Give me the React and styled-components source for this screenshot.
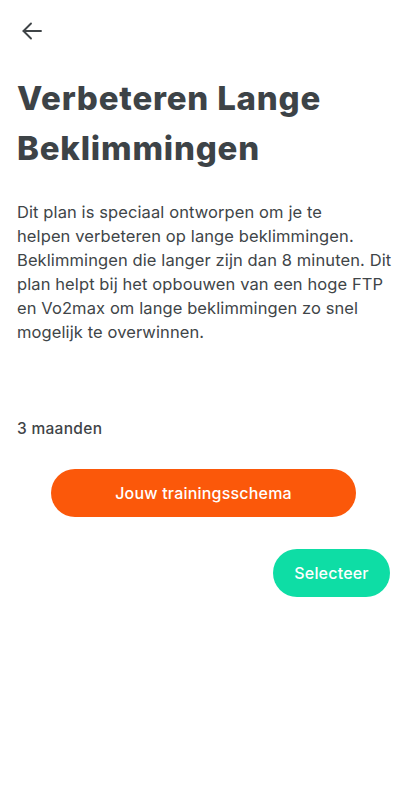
import React from "react";
import styled, { createGlobalStyle } from "styled-components";

const Global = createGlobalStyle`
  html, body { margin: 0; padding: 0; background: #fff; }
  body { font-family: "Inter", "Open Sans", sans-serif; }
  * { box-sizing: border-box; }
`;

const Page = styled.div`
  width: 407px;
  min-height: 800px;
  background: #fff;
  display: flex;
  flex-direction: column;
  padding: 0 17px;
  color: #3f4447;
`;

const TopBar = styled.div`
  height: 62px;
  display: flex;
  align-items: center;
`;

const BackButton = styled.button`
  width: 30px;
  height: 30px;
  border: 0;
  background: transparent;
  padding: 0;
  display: flex;
  align-items: center;
  justify-content: center;
  color: #3f4447;
  cursor: pointer;
`;

const Title = styled.h1`
  margin: 11px 0 0;
  font-family: "Inter", sans-serif;
  font-weight: 800;
  font-size: 33px;
  line-height: 50px;
  letter-spacing: 0.8px;
  color: #3d4347;
`;

const Description = styled.p`
  margin: 27px 0 0;
  font-family: "Inter", sans-serif;
  font-weight: 400;
  font-size: 16.5px;
  line-height: 24px;
  letter-spacing: 0.1px;
  color: #404548;
  white-space: nowrap;
`;

const Duration = styled.div`
  margin-top: 75px;
  font-family: "Inter", sans-serif;
  font-weight: 550;
  font-size: 15.5px;
  line-height: 20px;
  letter-spacing: 0.3px;
  color: #3f4447;
`;

const ButtonRow = styled.div`
  display: flex;
  justify-content: ${(p) => p.$justify};
  margin-top: ${(p) => p.$top}px;
`;

const PillButton = styled.button`
  width: ${(p) => p.$width}px;
  height: 48px;
  border: 0;
  border-radius: 24px;
  background: ${(p) => p.$bg};
  color: #fff;
  font-family: "Inter", sans-serif;
  font-weight: 500;
  font-size: 16px;
  letter-spacing: 0.2px;
  cursor: pointer;
`;

export default function App() {
  return (
    <>
      <Global />
      <Page>
        <TopBar>
          <BackButton aria-label="Terug">
            <svg width="20" height="20" viewBox="0 0 20 20" fill="none" stroke="currentColor" strokeWidth="1.9" strokeLinecap="round" strokeLinejoin="round">
              <path d="M19 10H1.5" />
              <path d="M9 2.5L1.5 10L9 17.5" />
            </svg>
          </BackButton>
        </TopBar>
        <Title>Verbeteren Lange Beklimmingen</Title>
        <Description>
          Dit plan is speciaal ontworpen om je te
          <br />
          helpen verbeteren op lange beklimmingen.
          <br />
          Beklimmingen die langer zijn dan 8 minuten. Dit
          <br />
          plan helpt bij het opbouwen van een hoge FTP
          <br />
          en Vo2max om lange beklimmingen zo snel
          <br />
          mogelijk te overwinnen.
        </Description>
        <Duration>3 maanden</Duration>
        <ButtonRow $justify="center" $top={30}>
          <PillButton $bg="#fb580a" $width={305}>Jouw trainingsschema</PillButton>
        </ButtonRow>
        <ButtonRow $justify="flex-end" $top={32}>
          <PillButton $bg="#0edda5" $width={117}>Selecteer</PillButton>
        </ButtonRow>
      </Page>
    </>
  );
}
